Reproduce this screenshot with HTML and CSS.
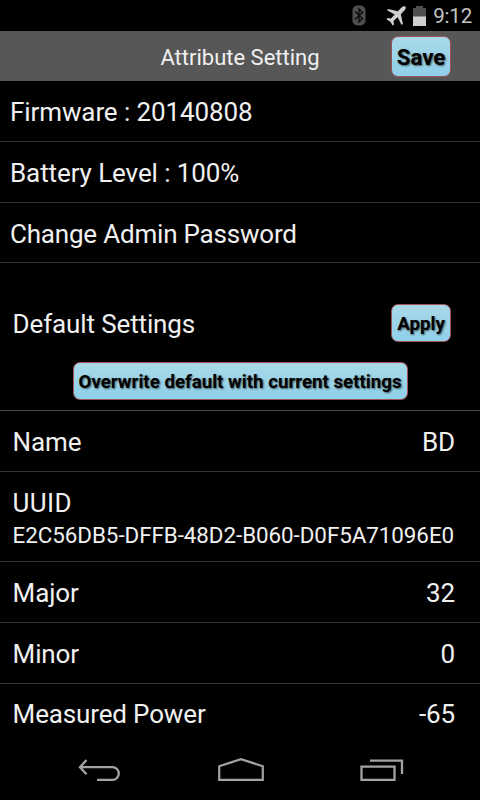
FILE: index.html
```html
<!DOCTYPE html>
<html lang="en">
<head>
    <meta charset="utf-8" />
    <title>Attribute Setting</title>
    <link rel="stylesheet" href="styles.css">
</head>
<body>
    <div class="screen">
        <div class="status">
            <svg class="icon_bt" width="14" height="21" viewBox="0 0 14 21">
                <rect x="0.5" y="0.5" width="13" height="20" rx="5" fill="#4e4e4e" />
                <path d="M3 6.5L10.5 13.5L7 17V4L10.5 7.5L3 14.5" fill="none" stroke="#0a0a0a" stroke-width="1.3" />
            </svg>
            <svg class="icon_plane" width="20" height="20" viewBox="0 0 20 20">
                <path d="M19.4 0.6C18.3 -0.2 16.6 0.5 15.5 1.6L11.8 5.2L2.2 3L1 4.3L8.7 8.4L4.9 12.4L1.6 12L0.4 13.2L4.3 15.7L6.7 19.6L8 18.4L7.5 15L11.6 11.2L15.6 18.9L16.9 17.7L14.8 8.2L18.4 4.6C19.5 3.4 20.2 1.7 19.4 0.6Z" fill="#cfcfcf" />
            </svg>
            <svg class="icon_battery" width="13" height="20" viewBox="0 0 13 20">
                <path d="M3 0H10V2H13V11H0V2H3Z" fill="#4e4e4e" />
                <rect x="0" y="10.5" width="13" height="9.5" fill="#cfcfcf" />
            </svg>
            <span class="clock">9:12</span>
        </div>

        <div class="header">
            <span class="title">Attribute Setting</span>
            <button class="btn btn_save">Save</button>
        </div>

        <div class="row info"><span>Firmware : 20140808</span></div>
        <div class="row info"><span>Battery Level : 100%</span></div>
        <div class="row info info_last"><span>Change Admin Password</span></div>

        <div class="defaults">
            <div class="defaults_top">
                <span class="defaults_label">Default Settings</span>
                <button class="btn btn_apply">Apply</button>
            </div>
            <button class="btn btn_overwrite">Overwrite default with current settings</button>
        </div>

        <div class="row"><span>Name</span><span>BD</span></div>
        <div class="row uuid">
            <span class="uuid_label">UUID</span>
            <span class="uuid_value">E2C56DB5-DFFB-48D2-B060-D0F5A71096E0</span>
        </div>
        <div class="row"><span>Major</span><span>32</span></div>
        <div class="row"><span>Minor</span><span>0</span></div>
        <div class="row last"><span>Measured Power</span><span>-65</span></div>

        <div class="nav">
            <svg width="44" height="26" viewBox="0 0 44 26">
                <path d="M9.5 2L3 9.2L9.5 16.2M3.5 9.2H35.5A6.2 6.2 0 0 1 35.5 21.8H20" fill="none" stroke="#a3a3a3" stroke-width="2.3" />
            </svg>
            <svg width="46" height="26" viewBox="0 0 46 26">
                <path d="M1.2 21.8V8.2L23 1.2L44.8 8.2V21.8Z" fill="none" stroke="#a3a3a3" stroke-width="2.2" />
            </svg>
            <svg width="44" height="26" viewBox="0 0 44 26">
                <path d="M1.5 8.7H34.5V21.8H1.5ZM10 2.7H42V16" fill="none" stroke="#a3a3a3" stroke-width="2.3" />
            </svg>
        </div>
    </div>
</body>
</html>
```
FILE: styles.css
```css
body {
    margin: 0;
    background-color: black;
    font-family: Roboto, "Liberation Sans", sans-serif;
    color: #f0f0f0;
}

.screen {
    display: flex;
    flex-direction: column;
    width: 480px;
    height: 800px;
    overflow: hidden;
    background-color: black;
}

.status {
    display: flex;
    align-items: center;
    justify-content: flex-end;
    height: 31px;
    padding-right: 8px;
    box-sizing: border-box;
}

.icon_bt {
    margin-right: 20px;
}

.icon_plane {
    margin-right: 7px;
}

.icon_battery {
    margin-right: 7px;
}

.clock {
    font-size: 20.5px;
    line-height: 31px;
    letter-spacing: -0.2px;
    color: #c4c4c4;
    padding-top: 1px;
}

.header {
    display: grid;
    grid-template-columns: 1fr 160px 1fr;
    align-items: center;
    height: 50px;
    background-color: #575757;
}

.title {
    grid-column: 2;
    padding-top: 2px;
    font-size: 22px;
    text-align: center;
    white-space: nowrap;
}

.btn {
    padding: 2px 0 0 0;
    box-sizing: border-box;
    border: 1px solid #a0525a;
    border-radius: 7px;
    background: linear-gradient(#a9d9e8, #8fd0ea);
    color: black;
    font-family: Roboto, "Liberation Sans", sans-serif;
    font-weight: bold;
    text-shadow: 1px 1px 2px rgba(0, 0, 0, 0.6);
    white-space: nowrap;
}

.btn_save {
    justify-self: end;
    width: 60px;
    height: 41px;
    margin-right: 29px;
    font-size: 22.3px;
}

.row {
    display: flex;
    align-items: center;
    justify-content: space-between;
    height: 61px;
    padding: 1px 25px 0 12.6px;
    box-sizing: border-box;
    border-bottom: 1px solid #333;
    font-size: 26px;
    line-height: 30px;
    letter-spacing: -0.15px;
}

.info {
    padding-left: 10px;
    letter-spacing: -0.1px;
}

.info_last {
    height: 60px;
    padding-top: 2px;
    letter-spacing: -0.2px;
}

.defaults {
    display: flex;
    flex-direction: column;
    height: 148px;
    padding-top: 41px;
    box-sizing: border-box;
    border-bottom: 1px solid #4a4a4a;
}

.defaults_top {
    display: flex;
    align-items: center;
    justify-content: space-between;
    padding: 0 29px 0 12.6px;
    font-size: 26px;
    letter-spacing: -0.13px;
}

.defaults_label {
    padding-top: 2px;
}

.btn_apply {
    width: 60px;
    height: 38px;
    font-size: 18.7px;
}

.btn_overwrite {
    align-self: center;
    width: 335px;
    height: 38px;
    margin-top: 20px;
    font-size: 18.7px;
}

.uuid {
    flex-direction: column;
    align-items: flex-start;
    justify-content: flex-start;
    height: 90px;
    padding-top: 16px;
}

.uuid_label {
    letter-spacing: 0.4px;
}

.uuid_value {
    font-size: 22.4px;
    line-height: 34px;
    letter-spacing: -0.06px;
    white-space: nowrap;
}

.last {
    height: 59px;
    border-bottom: none;
}

.nav {
    display: flex;
    justify-content: space-between;
    margin-top: auto;
    height: 42px;
    padding: 0 76px 0 77px;
}
```
